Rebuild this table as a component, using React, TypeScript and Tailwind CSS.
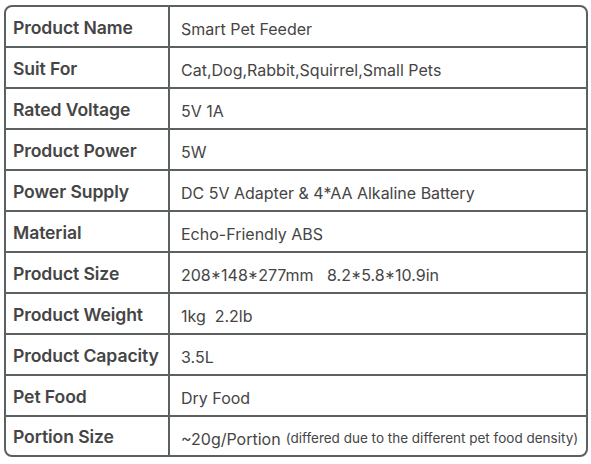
import React from "react";

const rows: [string, React.ReactNode][] = [
  ["Product Name", "Smart Pet Feeder"],
  ["Suit For", "Cat,Dog,Rabbit,Squirrel,Small Pets"],
  ["Rated Voltage", "5V 1A"],
  ["Product Power", "5W"],
  ["Power Supply", "DC 5V Adapter & 4*AA Alkaline Battery"],
  ["Material", "Echo-Friendly ABS"],
  ["Product Size", "208*148*277mm\u00a0\u00a0\u00a08.2*5.8*10.9in"],
  ["Product Weight", "1kg\u00a0\u00a02.2lb"],
  ["Product Capacity", "3.5L"],
  ["Pet Food", "Dry Food"],
  [
    "Portion Size",
    <>
      ~20g/Portion
      <span className="ml-[5px] text-[13.5px]">(differed due to the different pet food density)</span>
    </>,
  ],
];

export default function App() {
  return (
    <div className="w-[591px] h-[464px] bg-white pt-[5px] pl-[4px]" style={{ fontFamily: "Inter, 'Noto Sans', sans-serif" }}>
      <div className="w-[584px] border-2 border-[#5b6060] rounded-[8px] overflow-hidden text-[#454545]">
        {rows.map(([k, v], i) => (
          <div
            key={i}
            className={`flex ${i === 0 ? "h-[39px]" : i === 10 ? "h-[40px] border-t-2 border-[#5b6060]" : "h-[41px] border-t-2 border-[#5b6060]"}`}
          >
            <div className="w-[164px] shrink-0 border-r-2 border-[#5b6060] flex items-center pl-[7px] pt-[3px] text-[17.6px] font-semibold tracking-[-0.1px]">
              {k}
            </div>
            <div className="flex-1 flex items-center pl-[11px] pt-[5px] text-[16px] whitespace-nowrap">
              {v}
            </div>
          </div>
        ))}
      </div>
    </div>
  );
}
